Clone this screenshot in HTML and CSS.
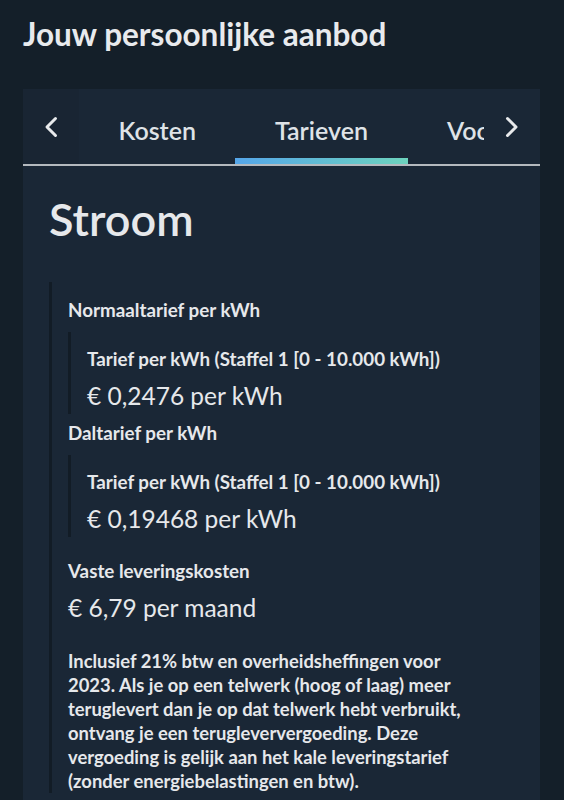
FILE: index.html
```html
<!DOCTYPE html>
<html lang="nl">
<head>
<meta charset="utf-8">
<title>Jouw persoonlijke aanbod</title>
<link rel="stylesheet" href="styles.css">
</head>
<body>
<div class="page">
  <h1 class="page-title">Jouw persoonlijke aanbod</h1>
  <div class="card">
    <nav class="tabs">
      <button class="tab-arrow tab-arrow-left" aria-label="Vorige">
        <svg width="14" height="22" viewBox="0 0 14 22"><path d="M11.5 2.5 L3 11 L11.5 19.5" fill="none" stroke="#e8eaec" stroke-width="3" stroke-linecap="round" stroke-linejoin="round"/></svg>
      </button>
      <div class="tab-viewport">
        <div class="tab-strip">
          <div class="tab">Kosten</div>
          <div class="tab tab-active">Tarieven</div>
          <div class="tab">Voorwaarden</div>
        </div>
      </div>
      <button class="tab-arrow tab-arrow-right" aria-label="Volgende">
        <svg width="14" height="22" viewBox="0 0 14 22"><path d="M2.5 2.5 L11 11 L2.5 19.5" fill="none" stroke="#e8eaec" stroke-width="3" stroke-linecap="round" stroke-linejoin="round"/></svg>
      </button>
    </nav>
    <div class="card-body">
      <h2 class="section-title">Stroom</h2>
      <div class="section">
        <div class="label">Normaaltarief per kWh</div>
        <div class="subbox">
          <div class="label">Tarief per kWh (Staffel 1 [0 - 10.000 kWh])</div>
          <div class="value">€ 0,2476 per kWh</div>
        </div>
        <div class="label label-tight">Daltarief per kWh</div>
        <div class="subbox">
          <div class="label">Tarief per kWh (Staffel 1 [0 - 10.000 kWh])</div>
          <div class="value">€ 0,19468 per kWh</div>
        </div>
        <div class="label label-spaced">Vaste leveringskosten</div>
        <div class="value value-plain">€ 6,79 per maand</div>
        <p class="note">Inclusief 21% btw en overheidsheffingen voor 2023. Als je op een telwerk (hoog of laag) meer teruglevert dan je op dat telwerk hebt verbruikt, ontvang je een terugleververgoeding. Deze vergoeding is gelijk aan het kale leveringstarief (zonder energiebelastingen en btw).</p>
      </div>
    </div>
  </div>
</div>
</body>
</html>
```

FILE: styles.css
```css
html, body {
  margin: 0;
  padding: 0;
  background: #141f29;
}
body {
  font-family: Lato, "Open Sans", sans-serif;
  color: #e6e8eb;
}
.page {
  padding: 16px 24px 0 23px;
}
.page-title {
  margin: 0;
  font-size: 31.5px;
  line-height: 36px;
  font-weight: 700;
  color: #e8eaed;
}
.card {
  margin-top: 37px;
  background: #1a2736;
  min-height: 760px;
}
.tabs {
  display: flex;
  height: 75px;
  border-bottom: 2px solid #b4b9be;
}
.tab-arrow {
  flex: 0 0 56px;
  width: 56px;
  border: 0;
  padding: 0;
  margin: 0;
  display: flex;
  align-items: center;
  justify-content: center;
  background: #1a2736;
  cursor: pointer;
}
.tab-arrow-left {
  background: #192533;
}
.tab-viewport {
  flex: 1 1 auto;
  overflow: hidden;
}
.tab-strip {
  display: flex;
  height: 100%;
}
.tab {
  flex: 0 0 auto;
  display: flex;
  align-items: center;
  justify-content: center;
  padding: 6px 39.5px 0;
  font-size: 25px;
  font-weight: 600;
  color: #dfe3e7;
  box-sizing: border-box;
  white-space: nowrap;
}
.tab-active {
  border-bottom: 6px solid transparent;
  border-image: linear-gradient(90deg, #55a6ea, #6dd3bd) 1;
  padding-top: 12px;
}
.card-body {
  padding: 28px 30px 0 26px;
}
.section-title {
  margin: 0;
  font-size: 45px;
  line-height: 50px;
  font-weight: 600;
  color: #e6e8eb;
}
.section {
  margin-top: 38px;
  border-left: 3px solid #121c26;
  padding: 18px 0 0 16px;
}
.label {
  font-size: 18.8px;
  line-height: 20px;
  font-weight: 700;
}
.label-tight {
  margin-top: 9px;
}
.label-spaced {
  margin-top: 24px;
}
.subbox {
  margin-top: 12px;
  border-left: 3px solid #121c26;
  padding: 17px 0 4px 16px;
}
.value {
  margin-top: 12px;
  font-size: 24.5px;
  line-height: 29px;
  font-weight: 400;
}
.value-plain {
  margin-top: 12px;
}
.note {
  margin: 27px 0 0 0;
  max-width: 405px;
  font-size: 18.4px;
  line-height: 24px;
  font-weight: 700;
}
```
